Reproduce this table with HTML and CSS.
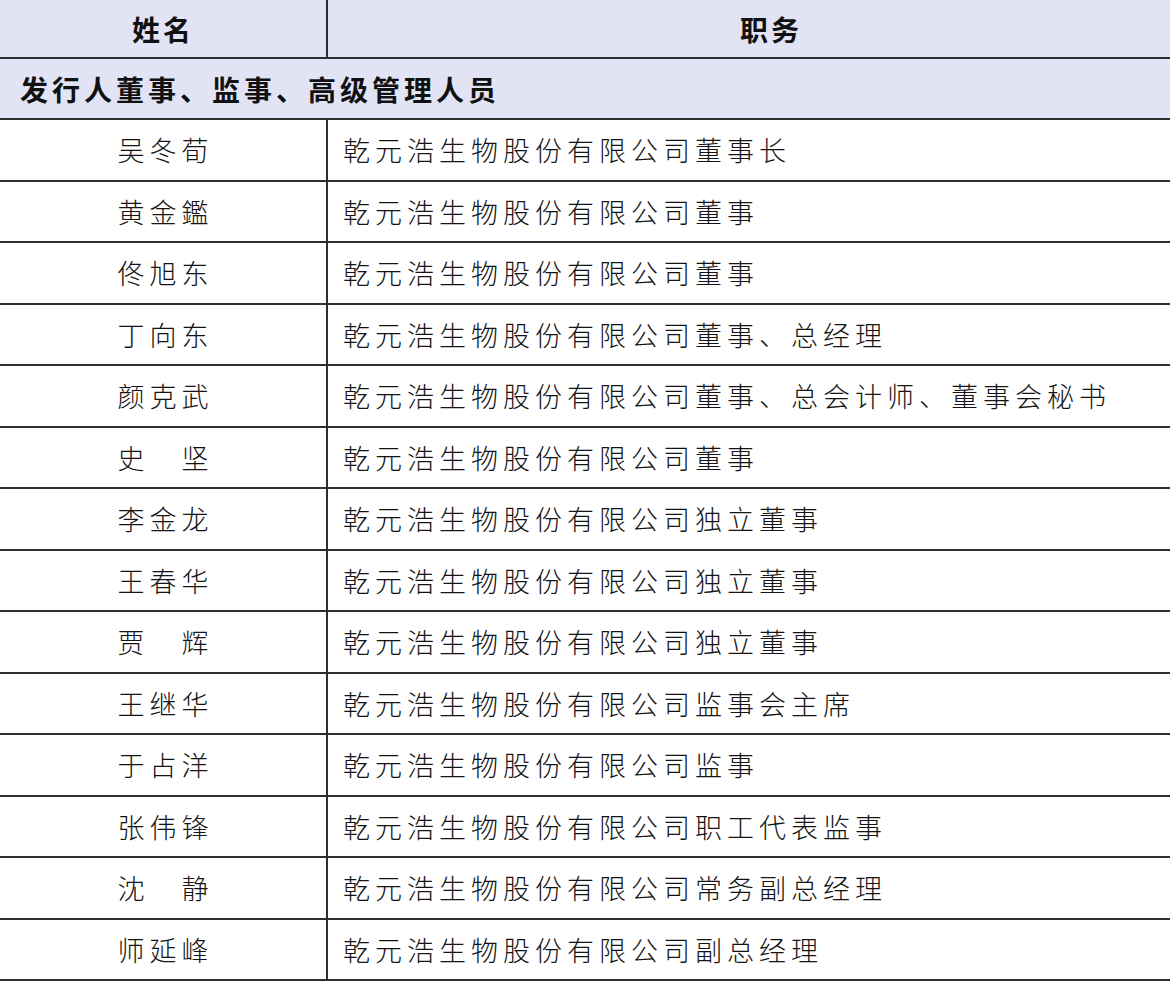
FILE: index.html
```html
<!DOCTYPE html>
<html lang="zh-CN">
<head>
<meta charset="utf-8">
<title>发行人董事、监事、高级管理人员</title>
<link rel="stylesheet" href="styles.css">
</head>
<body>
<div class="table">
  <div class="row head">
    <div class="cell name">姓名</div>
    <div class="cell duty">职务</div>
  </div>
  <div class="row section">
    <div class="cell sect">发行人董事、监事、高级管理人员</div>
  </div>
  <div class="row"><div class="cell name">吴冬荀</div><div class="cell duty">乾元浩生物股份有限公司董事长</div></div>
  <div class="row"><div class="cell name">黄金鑑</div><div class="cell duty">乾元浩生物股份有限公司董事</div></div>
  <div class="row"><div class="cell name">佟旭东</div><div class="cell duty">乾元浩生物股份有限公司董事</div></div>
  <div class="row"><div class="cell name">丁向东</div><div class="cell duty">乾元浩生物股份有限公司董事、总经理</div></div>
  <div class="row"><div class="cell name">颜克武</div><div class="cell duty">乾元浩生物股份有限公司董事、总会计师、董事会秘书</div></div>
  <div class="row"><div class="cell name">史　坚</div><div class="cell duty">乾元浩生物股份有限公司董事</div></div>
  <div class="row"><div class="cell name">李金龙</div><div class="cell duty">乾元浩生物股份有限公司独立董事</div></div>
  <div class="row"><div class="cell name">王春华</div><div class="cell duty">乾元浩生物股份有限公司独立董事</div></div>
  <div class="row"><div class="cell name">贾　辉</div><div class="cell duty">乾元浩生物股份有限公司独立董事</div></div>
  <div class="row"><div class="cell name">王继华</div><div class="cell duty">乾元浩生物股份有限公司监事会主席</div></div>
  <div class="row"><div class="cell name">于占洋</div><div class="cell duty">乾元浩生物股份有限公司监事</div></div>
  <div class="row"><div class="cell name">张伟锋</div><div class="cell duty">乾元浩生物股份有限公司职工代表监事</div></div>
  <div class="row"><div class="cell name">沈　静</div><div class="cell duty">乾元浩生物股份有限公司常务副总经理</div></div>
  <div class="row"><div class="cell name">师延峰</div><div class="cell duty">乾元浩生物股份有限公司副总经理</div></div>
</div>
</body>
</html>
```

FILE: styles.css
```css
html, body {
  margin: 0;
  padding: 0;
  background: #ffffff;
}
body {
  width: 1170px;
  height: 988px;
  overflow: hidden;
  font-family: "Noto Sans CJK SC", "Noto Sans", sans-serif;
  color: #141414;
}
.table {
  display: flex;
  flex-direction: column;
  width: 1170px;
}
.row {
  display: grid;
  grid-template-columns: 326px 1fr;
  height: 59.5px;
  border-bottom: 2px solid #2e2e2e;
  font-size: 27px;
  font-weight: 300;
  letter-spacing: 5px;
}
.cell {
  display: flex;
  align-items: center;
  white-space: nowrap;
}
.name {
  justify-content: center;
  padding-left: 5px;
}
.duty {
  border-left: 2px solid #2e2e2e;
  padding-left: 15px;
}
.head {
  height: 57px;
  background: #e2e3f5;
  font-size: 28px;
  font-weight: 700;
  letter-spacing: 3px;
  color: #111111;
}
.head .duty {
  justify-content: center;
  padding-left: 44px;
}
.head .name {
  padding-left: 0;
}
.section {
  display: flex;
  height: 59px;
  background: #e2e3f5;
  font-size: 28px;
  font-weight: 700;
  letter-spacing: 4px;
  color: #111111;
}
.sect {
  padding-left: 20px;
}
```
